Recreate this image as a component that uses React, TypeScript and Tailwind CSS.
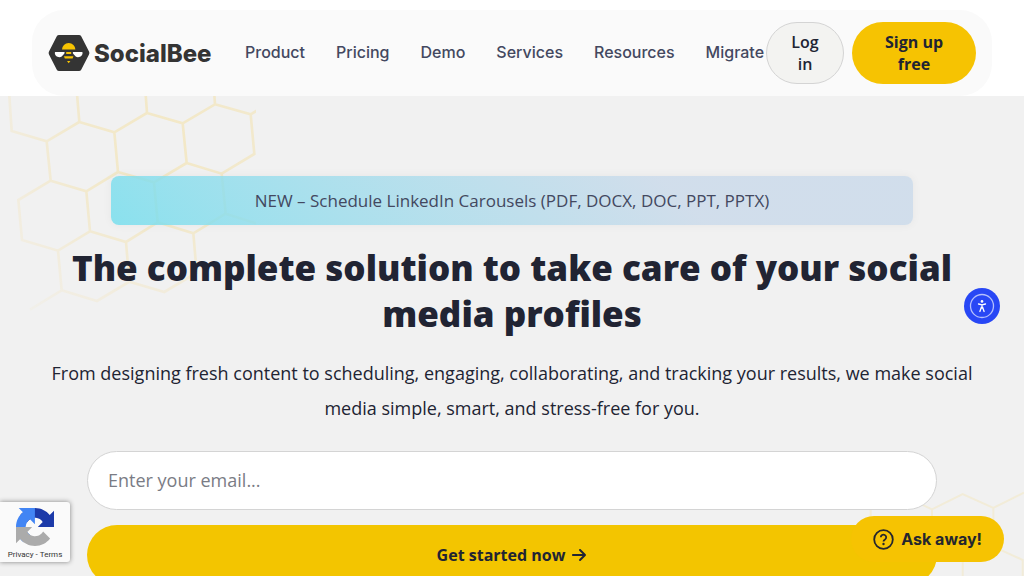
import { FaArrowRight } from "react-icons/fa6"

const navLinks = ["Product", "Pricing", "Demo", "Services", "Resources", "Migrate"]

export default function App() {
  return (
    <div className="relative h-screen overflow-hidden bg-[#f1f1f1] font-['Open_Sans','Noto_Sans',sans-serif] text-[#212433]">
      <Header />
      <main className="relative px-8 pt-20">
        <HoneycombLeft />
        <HoneycombRight />
        <Hero />
      </main>
      <RecaptchaBadge />
      <AccessibilityButton />
      <AskButton />
    </div>
  )
}

const Header = () => {
  return (
    <header className="relative z-10 bg-white px-8 pt-2.5">
      <div className="flex items-center justify-between rounded-[32px] bg-[#fafafa] px-4 py-3">
        <div className="flex min-w-0 items-center gap-8">
          <a href="#" className="flex shrink-0 items-center gap-1" aria-label="SocialBee">
            <BeeLogo />
            <span className="w-[119px] pt-0.5 font-['Inter',sans-serif] text-2xl font-extrabold text-[#343434]">
              SocialBee
            </span>
          </a>
          <nav className="flex gap-[31px] pb-0.5 font-['Inter',sans-serif] text-base font-medium text-[#434860]">
            {navLinks.map((link) => (
              <a key={link} href="#">
                {link}
              </a>
            ))}
          </nav>
        </div>
        <div className="flex shrink-0 gap-2 text-base leading-[22px] font-semibold">
          <button className="w-[78px] rounded-[31px] border border-[#d4d4d4] bg-[#f3f3f1] px-5 py-2">
            Log in
          </button>
          <button className="w-[124px] rounded-[31px] bg-[#f6c302] px-7 py-[9px] font-bold">
            Sign up free
          </button>
        </div>
      </div>
    </header>
  )
}

const Hero = () => {
  return (
    <section className="relative flex flex-col items-center text-center">
      <a
        href="#"
        className="w-[802px] max-w-full rounded-lg bg-linear-45 from-[#70dded]/80 to-[#c9d9ea]/80 to-70% py-3 text-[17px] leading-[25px] text-[#434860] shadow-[0_0_10px_rgba(0,0,0,0.05)]"
      >
        NEW – Schedule LinkedIn Carousels (PDF, DOCX, DOC, PPT, PPTX)
      </a>
      <h1 className="mt-5 text-[35px] leading-[46px] font-extrabold">
        The complete solution to take care of your social media profiles
      </h1>
      <p className="mt-[19px] text-lg leading-[35px]">
        From designing fresh content to scheduling, engaging, collaborating, and tracking your
        results, we make social media simple, smart, and stress-free for you.
      </p>
      <form className="mt-[25px] flex w-[850px] max-w-full flex-col gap-[15px]">
        <input
          type="email"
          aria-label="Email"
          placeholder="Enter your email..."
          className="h-[59px] rounded-full border border-[#d4d4d4] bg-white px-5 pb-0.5 text-lg placeholder:text-[#7a7c85]"
        />
        <button
          type="button"
          className="flex h-[60px] items-center justify-center gap-1.5 rounded-full bg-[#f3c500] text-base font-bold"
        >
          Get started now
          <FaArrowRight />
        </button>
      </form>
    </section>
  )
}

const BeeLogo = () => {
  return (
    <svg width="42" height="36" viewBox="0 0 42 36" aria-hidden="true">
      <path
        d="M11 0h20q1.500 0 2.200 1.300L41 16.500q.8 1.500 0 3L33.200 34.700Q32.500 36 31 36H11q-1.500 0-2.200-1.300L1 19.500q-.8-1.500 0-3L8.800 1.300Q9.500 0 11 0z"
        fill="#343434"
      />
      <path d="M14 14.500a6.700 6.500 0 0 1 13.400 0z" fill="#f6c302" />
      <path d="M18.200 17h5v1.900h-5zM16 21.200h9.400l-.8 2.200h-7.800zM19 26h3.400l-1.700 2.300z" fill="#f6c302" />
      <path
        d="M7.200 17h9.200q.7 1-.4 2.100l-2.300 2.300q-1.400 1.100-3.400.6C8 21.500 6.800 19.800 6.800 18q0-.7.4-1zM34.200 17H25q-.7 1 .4 2.100l2.300 2.300q1.400 1.100 3.400.6C33.400 21.500 34.600 19.800 34.600 18q0-.7-.4-1z"
        fill="#fff"
      />
    </svg>
  )
}

const HoneycombLeft = () => {
  return (
    <svg
      className="absolute top-0 left-0"
      width="256"
      height="224"
      viewBox="0 18 768 672"
      fill="none"
      stroke="url(#combFade)"
      strokeWidth="8"
      aria-hidden="true"
    >
      <defs>
        <radialGradient id="combFade" gradientUnits="userSpaceOnUse" cx="500" cy="150" r="680">
          <stop offset="0" stopColor="#f3e8c6" />
          <stop offset="0.4" stopColor="#f2e9cd" />
          <stop offset="0.75" stopColor="#f2ede0" />
          <stop offset="1" stopColor="#f1f0ec" />
        </radialGradient>
      </defs>
      <path d="M28 18l7 105 105 31 98-58-8-96M238 96l105 31 98-58-5-69M441 69l107 31 97-57-3-43M645 43l107 30 20-12M752 73l11 119-98 59-105-32-12-119M343 127l11 119 108 31 98-58M140 154l12 118 107 32 95-58M152 272l-97 58 11 120 108 32 96-58-11-120M462 277l11 120-95 59-108-32M473 397l107 33 97-59-12-120M677 371l91 29M174 482l11 119-95 58M185 601l106 32 97-58-10-119M388 575l105 31 97-58-10-118" />
    </svg>
  )
}

const HoneycombRight = () => {
  return (
    <svg
      className="absolute top-[384px] right-0"
      width="184"
      height="96"
      viewBox="0 0 552 288"
      fill="none"
      stroke="#f2ecd8"
      strokeWidth="6"
      aria-hidden="true"
    >
      <path d="M92 130V86l90-42 94 44 92-46 92 42 92-46M276 88v82l92 46 92-46V84M368 216v80M460 200l88 40v60" />
    </svg>
  )
}

const RecaptchaBadge = () => {
  return (
    <div className="absolute bottom-3.5 left-0 flex h-[60px] w-[70px] flex-col items-center rounded-r-[3px] bg-[#fafafa] pt-1.5 shadow-[0_0_5px_gray]">
      <svg width="38" height="38" viewBox="0 0 64 64" aria-hidden="true">
        <path
          d="M64 31.955l-.033-1.370V4.687l-7.160 7.160C50.948 4.674 42.033.093 32.050.093c-10.400 0-19.622 4.960-25.458 12.640l11.736 11.860a15.550 15.550 0 0 1 4.754-5.334c2.050-1.600 4.952-2.906 8.968-2.906.485 0 .860.057 1.135.163 4.976.393 9.288 3.140 11.828 7.124l-8.307 8.307L64 31.953z"
          fill="#1c3aa9"
        />
        <path
          d="M31.862.094l-1.370.033H4.594l7.160 7.160C4.580 13.147 0 22.060 0 32.046c0 10.400 4.960 19.622 12.640 25.458L24.500 45.768a15.550 15.550 0 0 1-5.334-4.754c-1.600-2.050-2.906-4.952-2.906-8.968 0-.485.057-.860.163-1.135.393-4.976 3.140-9.288 7.124-11.828l8.307 8.307L31.860.095z"
          fill="#4285f4"
        />
        <path
          d="M.001 32.045l.033 1.370v25.898l7.160-7.160c5.860 7.173 14.774 11.754 24.760 11.754 10.400 0 19.622-4.960 25.458-12.640l-11.736-11.860a15.550 15.550 0 0 1-4.754 5.334c-2.050 1.600-4.952 2.906-8.968 2.906-.485 0-.860-.057-1.135-.163-4.976-.393-9.288-3.140-11.828-7.124l8.307-8.307L.003 32.046z"
          fill="#ababab"
        />
      </svg>
      <div className="mt-1 flex gap-0.5 font-['Roboto',sans-serif] text-[8px] leading-[10px] text-[#333]">
        <a href="#">Privacy</a>
        <span>-</span>
        <a href="#">Terms</a>
      </div>
    </div>
  )
}

const AccessibilityButton = () => {
  return (
    <button className="absolute top-72 right-6 rounded-full" aria-label="Accessibility">
      <svg width="36" height="36" viewBox="0 0 36 36">
        <circle cx="18" cy="18" r="18" fill="#2847f5" />
        <circle cx="18" cy="18" r="11.500" fill="none" stroke="#b5c0fc" strokeWidth="1.300" />
        <circle cx="18" cy="13.400" r="1.300" fill="#fff" />
        <path
          d="M14.500 16l3.500.8 3.500-.8M18 17v3M15.900 23.500l1.400-4h1.400l1.400 4"
          fill="none"
          stroke="#fff"
          strokeWidth="1.300"
          strokeLinecap="round"
        />
      </svg>
    </button>
  )
}

const AskButton = () => {
  return (
    <button className="absolute right-5 bottom-3.5 flex h-[46px] items-center gap-[7px] rounded-full bg-[#f6c302] px-[22px] font-['Inter',sans-serif] text-base font-bold text-[#24262e]">
      <svg width="21" height="21" viewBox="0 0 21 21" fill="none" stroke="#24262e" aria-hidden="true">
        <circle cx="10.500" cy="10.500" r="9.300" strokeWidth="1.800" />
        <path d="M7.800 8.300a2.700 2.600 0 1 1 4.200 2.100q-1.500.9-1.500 2.100" strokeWidth="1.800" />
        <circle cx="10.500" cy="15" r="1.200" fill="#24262e" stroke="none" />
      </svg>
      Ask away!
    </button>
  )
}
